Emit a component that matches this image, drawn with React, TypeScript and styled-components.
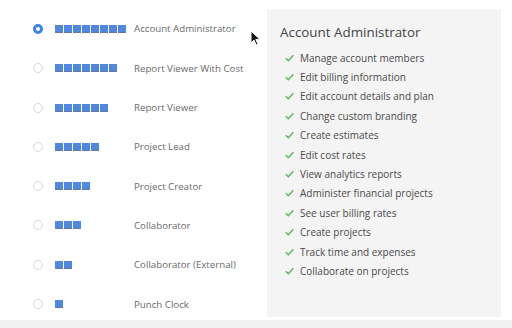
import styled, { createGlobalStyle } from 'styled-components';

const roles = [
  { name: 'Account Administrator', level: 8 },
  { name: 'Report Viewer With Cost', level: 7 },
  { name: 'Report Viewer', level: 6 },
  { name: 'Project Lead', level: 5 },
  { name: 'Project Creator', level: 4 },
  { name: 'Collaborator', level: 3 },
  { name: 'Collaborator (External)', level: 2 },
  { name: 'Punch Clock', level: 1 },
];

const permissions = [
  'Manage account members',
  'Edit billing information',
  'Edit account details and plan',
  'Change custom branding',
  'Create estimates',
  'Edit cost rates',
  'View analytics reports',
  'Administer financial projects',
  'See user billing rates',
  'Create projects',
  'Track time and expenses',
  'Collaborate on projects',
];

const GlobalStyle = createGlobalStyle`
  html, body {
    margin: 0;
    padding: 0;
    background: #fff;
    font-family: "Open Sans", "Liberation Sans", sans-serif;
  }
`;

const Check = () => (
  <svg width="9" height="8" viewBox="0 0 9 8">
    <polyline
      points="0.8,4.2 3.3,6.7 8.4,1.2"
      fill="none"
      stroke="#5cb860"
      strokeWidth="1.5"
    />
  </svg>
);

const Cursor = () => (
  <CursorWrap>
    <svg width="11" height="16" viewBox="0 0 11 16">
      <path
        d="M1 1 L1 13 L4 10 L6.2 15 L8 14.2 L5.8 9.4 L10 9.4 Z"
        fill="#111"
        stroke="#fff"
        strokeWidth="1"
        strokeLinejoin="round"
      />
    </svg>
  </CursorWrap>
);

export default function App() {
  return (
    <>
      <GlobalStyle />
      <Page>
        <Main>
          <RoleList>
            {roles.map((role, i) => (
              <RoleRow key={role.name}>
                <Radio $checked={i === 0} />
                <Level>
                  {Array.from({ length: role.level }).map((_, j) => (
                    <Block key={j} />
                  ))}
                </Level>
                <RoleName>{role.name}</RoleName>
              </RoleRow>
            ))}
          </RoleList>
          <Panel>
            <PanelTitle>Account Administrator</PanelTitle>
            <PermList>
              {permissions.map((p) => (
                <PermItem key={p}>
                  <Check />
                  <span>{p}</span>
                </PermItem>
              ))}
            </PermList>
          </Panel>
          <Cursor />
        </Main>
        <Footer />
      </Page>
    </>
  );
}

const Page = styled.div`
  width: 512px;
  height: 328px;
  display: flex;
  flex-direction: column;
  overflow: hidden;
`;

const Main = styled.div`
  position: relative;
  height: 320px;
  flex-shrink: 0;
  display: flex;
  align-items: flex-start;
  padding-top: 9px;
  box-sizing: border-box;
`;

const RoleList = styled.div`
  width: 267px;
  padding-top: 0.35px;
  padding-left: 33px;
  box-sizing: border-box;
  display: flex;
  flex-direction: column;
`;

const RoleRow = styled.div`
  height: 39.3px;
  flex-shrink: 0;
  display: flex;
  align-items: center;
`;

const Radio = styled.span<{ $checked?: boolean }>`
  width: 10px;
  height: 10px;
  border-radius: 50%;
  box-sizing: border-box;
  flex-shrink: 0;
  background: #fff;
  border: ${(p) => (p.$checked ? '3px solid #3d84e6' : '1px solid #d8d8d8')};
`;

const Level = styled.div`
  width: 79px;
  margin-left: 12px;
  display: flex;
  gap: 1px;
`;

const Block = styled.span`
  width: 8px;
  height: 8px;
  background: #4f88de;
  border-bottom: 1px solid #62779a;
  box-sizing: border-box;
`;

const RoleName = styled.span`
  font-size: 9.7px;
  color: #6a6a6a;
`;

const Panel = styled.div`
  width: 234px;
  height: 308px;
  flex-shrink: 0;
  background: #f4f4f4;
  padding: 13px 0 0 13px;
  box-sizing: border-box;
`;

const PanelTitle = styled.div`
  font-size: 13.4px;
  line-height: 20px;
  color: #444;
`;

const PermList = styled.div`
  margin-top: 6px;
  display: flex;
  flex-direction: column;
`;

const PermItem = styled.div`
  height: 19.4px;
  display: flex;
  align-items: center;
  gap: 6px;
  padding-left: 5px;
  font-size: 10px;
  color: #4a4a4a;
`;

const CursorWrap = styled.div`
  position: absolute;
  left: 250px;
  top: 30px;
  line-height: 0;
`;

const Footer = styled.div`
  height: 8px;
  flex-shrink: 0;
  background: #f1f1f1;
`;
